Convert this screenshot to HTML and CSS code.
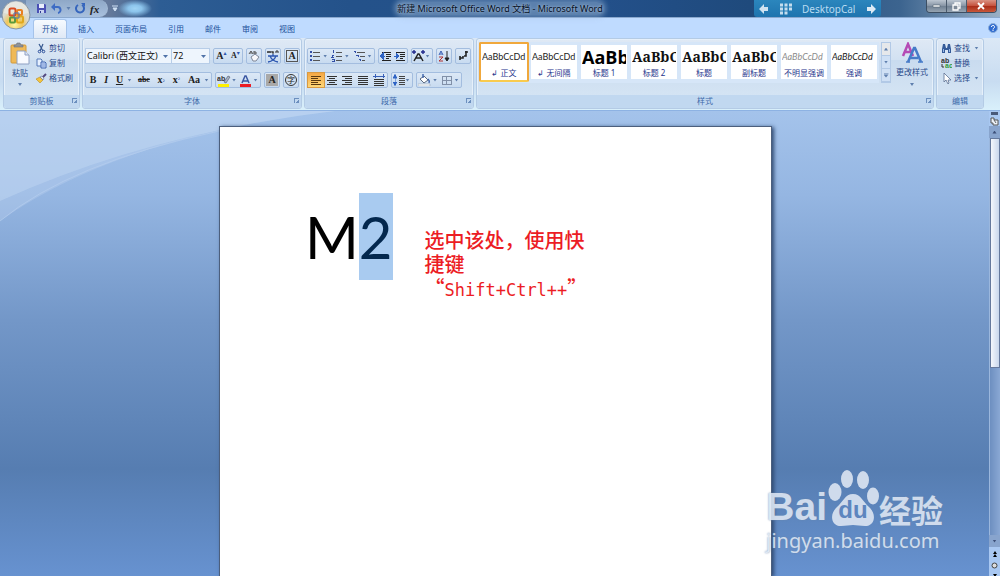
FILE: index.html
```html
<!DOCTYPE html>
<html lang="zh-CN">
<head>
<meta charset="utf-8">
<title>新建 Microsoft Office Word 文档 - Microsoft Word</title>
<link rel="stylesheet" href="styles.css">
</head>
<body>
<header class="titlebar">
  <div class="quick">
    <button class="plain" aria-label="保存"><svg width="11" height="11" viewBox="0 0 11 11"><path d="M1 1h8l1 1v8H1z" fill="#4a50b4"/><path d="M3 1h5v4H3z" fill="#e8eefc"/><path d="M3 7h5v3H3z" fill="#c9d3f1"/><path d="M4 8h1v2H4z" fill="#333c90"/></svg></button>
    <button class="plain" aria-label="撤消"><svg width="11" height="11" viewBox="0 0 11 11"><path d="M2 4h4a3 3 0 0 1 1 6" fill="none" stroke="#3e6cc4" stroke-width="2"/><path d="M0 4l4-4v8z" fill="#3e6cc4"/></svg></button>
    <i class="caret"></i>
    <button class="plain" aria-label="重复"><svg width="11" height="11" viewBox="0 0 11 11"><path d="M7 2a4 4 0 1 1-4 0" fill="none" stroke="#3565bd" stroke-width="2"/><path d="M6 0h4v4z" fill="#3565bd"/></svg></button>
    <button class="plain fx" aria-label="公式">fx</button>
  </div>
  <button class="plain more" aria-label="自定义快速访问工具栏"><svg width="6" height="7" viewBox="0 0 6 7"><path d="M0 1h6M1 3h4L3 6z" stroke="#cfe0f4" fill="#cfe0f4"/></svg></button>
  <div class="glow"></div>
  <h1 class="title"><span>新建 Microsoft Office Word 文档 - Microsoft Word</span></h1>
  <div class="desktopcal">
    <svg width="10" height="10" viewBox="0 0 10 10"><path d="M0 5l5-5v3h4v4H5v3z" fill="#cfe3f1"/></svg>
    <svg width="12" height="12" viewBox="0 0 12 12"><path d="M0 2h12M0 6h12M0 10h8" stroke="#c4ddee" stroke-width="3" stroke-dasharray="3 1.500"/></svg>
    <span>DesktopCal</span>
    <svg width="10" height="10" viewBox="0 0 10 10"><path d="M10 5L5 0v3H1v4h4v3z" fill="#dcebf5"/></svg>
  </div>
  <div class="winbtns">
    <button aria-label="最小化"><svg width="9" height="5" viewBox="0 0 9 5"><path d="M1 1h7v2H1z" fill="#fff" stroke="#53616f" stroke-width=".6"/></svg></button>
    <button aria-label="还原"><svg width="9" height="9" viewBox="0 0 9 9"><path d="M3 1h5v5H3z" fill="none" stroke="#fff" stroke-width="1.3"/><path d="M1 3h5v5H1z" fill="#7f8b98" stroke="#fff" stroke-width="1.3"/></svg></button>
    <button class="close" aria-label="关闭"><svg width="9" height="8" viewBox="0 0 9 8"><path d="M1 1l6 6M7 1L1 7" stroke="#fff" stroke-width="1.8"/></svg></button>
  </div>
</header>
<button class="office" aria-label="Office 按钮"><svg width="32" height="30" viewBox="0 0 30 30"><defs><radialGradient id="orb" cx=".45" cy=".85"><stop offset="0" stop-color="#fff7a0"/><stop offset=".55" stop-color="#f0c65c"/><stop offset="1" stop-color="#dbdad0"/></radialGradient></defs><circle cx="15" cy="15" r="14" fill="url(#orb)" stroke="#8796a6"/><path d="M3 13a12 12 0 0 1 24 0Q15 17 3 13z" fill="#fff" opacity=".35"/><rect x="8.500" y="8.500" width="6" height="7" rx="1.500" fill="none" stroke="#d94b20" stroke-width="2"/><rect x="16" y="10" width="5" height="5" rx="1" fill="none" stroke="#e88022" stroke-width="2"/><rect x="9" y="17.500" width="5" height="5" rx="1" fill="none" stroke="#5c9a3b" stroke-width="2"/><rect x="16" y="16.500" width="6" height="6" rx="1" fill="none" stroke="#e0a71c" stroke-width="2"/><path d="M13 13h5v5h-5z" fill="none" stroke="#4b79bd"/></svg></button>
<nav class="tabs">
  <button class="tab active">开始</button><button class="tab">插入</button><button class="tab">页面布局</button><button class="tab">引用</button><button class="tab">邮件</button><button class="tab">审阅</button><button class="tab">视图</button>
  <button class="plain help" aria-label="帮助"><svg width="10" height="10" viewBox="0 0 10 10"><circle cx="5" cy="5" r="4.500" fill="#2f6bd0" stroke="#8badd9"/><path d="M3.500 4a1.500 1.500 0 1 1 2 1.300L5 6.500M5 7v1" stroke="#fff" fill="none"/></svg></button>
</nav>
<main class="ribbon">
  <section class="group clipboard">
    <div class="body clip-body">
      <button class="plain paste"><svg width="20" height="24" viewBox="0 0 20 24"><rect x="1" y="3" width="15" height="18" rx="1" fill="#efb958" stroke="#d39a3b"/><path d="M4 5V3h2l1-2h3l1 2h2v2z" fill="#8d9299" stroke="#6c7179" stroke-width=".6"/><path d="M7 9h8l4 4v9H7z" fill="#f8faff" stroke="#8fa0c2"/><path d="M15 9v4h4" fill="#dbe4f4" stroke="#8fa0c2"/></svg><span>粘贴</span><i class="caret"></i></button>
      <div class="stack">
        <button class="plain item"><svg width="11" height="11" viewBox="0 0 11 11"><path d="M3 1l4 7M7 1L4 8" stroke="#37588f" stroke-width="1.2"/><circle cx="3.500" cy="8.500" r="1.300" fill="none" stroke="#2f539c"/><circle cx="7.500" cy="8.500" r="1.300" fill="none" stroke="#2f539c"/></svg>剪切</button>
        <button class="plain item"><svg width="11" height="11" viewBox="0 0 11 11"><path d="M1 1h4l1 1v6H1z" fill="#e6f0ff" stroke="#5579b8"/><path d="M5 4h4l1 1v5H5z" fill="#cddfff" stroke="#3f65ae"/><path d="M6 6h3M6 8h3" stroke="#4b6fb5" stroke-width=".7"/></svg>复制</button>
        <button class="plain item"><svg width="11" height="11" viewBox="0 0 11 11"><path d="M0 6l4-2 3 3-3 3z" fill="#f2c53f" stroke="#b98a25" stroke-width=".6"/><path d="M4 4l2-1 2 2-1 2z" fill="#dfe4ee" stroke="#596c92" stroke-width=".6"/><path d="M7 4l3-3" stroke="#544a82" stroke-width="2"/></svg>格式刷</button>
      </div>
    </div>
    <footer class="caption">剪贴板<i class="launch"></i></footer>
  </section>

  <section class="group font">
    <div class="body">
      <div class="row">
        <div class="combos"><label class="combo face"><select aria-label="字体"><option>Calibri (西文正文)</option></select></label><label class="combo size"><select aria-label="字号"><option>72</option></select></label></div>
        <div class="set w30"><button class="b serif" aria-label="增大字体">A<sup>▴</sup></button><button class="b serif small" aria-label="缩小字体">A<sup>▾</sup></button></div>
        <div class="set w16"><button class="b" aria-label="清除格式"><svg width="12" height="12" viewBox="0 0 12 12"><path d="M1 4l2-3 2 3M2 3h2M6 1v3h2V2H6" fill="none" stroke="#555"/><path d="M3 7l4-3 4 3-3 4H5z" fill="#f8f8fb" stroke="#7e8798"/></svg></button></div>
        <div class="set w16"><button class="b" aria-label="拼音指南"><svg width="12" height="13" viewBox="0 0 12 13"><path d="M0 1l1 2 1-2 1 2 1-2M5 2h2M5 1v2h2M9 3V1h2v2" fill="none" stroke="#333"/><path d="M1 6h10M6 4v2M3 6q2 5 8 6M9 6q-2 5-8 6" fill="none" stroke="#2c56b0" stroke-width="1.300"/></svg></button></div>
        <div class="set w16"><button class="b serif" aria-label="字符边框"><u class="boxed">A</u></button></div>
      </div>
      <div class="row">
        <div class="set w127"><button class="b serif">B</button><button class="b serif it">I</button><button class="b serif ul">U</button><i class="caret"></i><button class="b serif strike">abc</button><button class="b serif">x<sub>₂</sub></button><button class="b serif">x<sub>²</sub></button><button class="b serif aa">Aa</button><i class="caret last"></i></div>
        <div class="set w46"><button class="b mark" aria-label="突出显示"><svg width="14" height="13" viewBox="0 0 14 13"><path d="M1 10h11v3H1z" fill="#fff000"/><text x="0" y="7" class="tiny">ab</text><path d="M7 8l4-6 2 1-4 6z" fill="#aab3c3" stroke="#4a5468" stroke-width=".6"/></svg></button><i class="caret"></i><button class="b" aria-label="字体颜色"><svg width="13" height="13" viewBox="0 0 13 13"><path d="M3 9l3-7h1l3 7M4 7h5" fill="none" stroke="#3b58a2" stroke-width="1.5"/><path d="M1 10h11v3H1z" fill="#ec1c24"/></svg></button><i class="caret last"></i></div>
        <div class="set w16"><button class="b serif" aria-label="字符底纹"><span class="shade">A</span></button></div>
        <div class="set w16"><button class="b" aria-label="带圈字符"><span class="ring">字</span></button></div>
      </div>
    </div>
    <footer class="caption">字体<i class="launch"></i></footer>
  </section>

  <section class="group para">
    <div class="body">
      <div class="row">
        <div class="set w68"><button class="b" aria-label="项目符号"><svg class="lines" width="12" height="12" viewBox="0 0 12 12"><path d="M4 2h7M4 6h7M4 10h7" stroke="#555"/><path d="M1 2h2M1 6h2M1 10h2" stroke="#334fa6" stroke-width="2"/></svg></button><i class="caret"></i><button class="b" aria-label="编号"><svg class="lines" width="12" height="12" viewBox="0 0 12 12"><path d="M5 2h6M5 6h6M5 10h6" stroke="#555"/><path d="M2 0v3M1 5h2l-2 2h2M1 9h2v2H1" fill="none" stroke="#334fa6"/></svg></button><i class="caret"></i><button class="b" aria-label="多级列表"><svg class="lines" width="13" height="12" viewBox="0 0 13 12"><path d="M4 2h8M7 6h5M9 10h3" stroke="#555"/><path d="M1 1h1v2M3 5h2v2M6 9h1v2" fill="none" stroke="#334fa6"/></svg></button><i class="caret last"></i></div>
        <div class="set w30"><button class="b" aria-label="减少缩进"><svg class="lines" width="12" height="12" viewBox="0 0 12 12"><path d="M2 2h9M6 4h5M6 6h5M6 8h3M2 10h9" stroke="#222"/><path d="M0 6l3-3v6zM2 6h3" fill="#2e63c4" stroke="#2e63c4"/></svg></button><button class="b" aria-label="增加缩进"><svg class="lines" width="12" height="12" viewBox="0 0 12 12"><path d="M2 2h9M6 4h5M6 6h5M6 8h3M2 10h9" stroke="#222"/><path d="M5 6L2 3v6zM0 6h3" fill="#2e63c4" stroke="#2e63c4"/></svg></button></div>
        <div class="set w22"><button class="b" aria-label="中文版式"><svg width="13" height="12" viewBox="0 0 13 12"><path d="M2 11l4-7h1l4 7M4 8h5" fill="none" stroke="#222" stroke-width="1.500"/><path d="M0 2h4M9 2h4M2 0v4M11 0v4" stroke="#222a8c" stroke-width="1.400"/></svg></button><i class="caret last"></i></div>
        <div class="set w16"><button class="b" aria-label="排序"><svg width="12" height="12" viewBox="0 0 12 12"><path d="M1 5l2-4 2 4M2 4h2" fill="none" stroke="#355bb2"/><path d="M1 7h4l-4 4h4" fill="none" stroke="#b23333"/><path d="M9 1v9M7 8l2 3 2-3z" fill="#222" stroke="#222"/></svg></button></div>
        <div class="set w16"><button class="b" aria-label="显示编辑标记"><svg width="12" height="12" viewBox="0 0 12 12"><path d="M9 1v5H7M8 2h3M3 8h3V6M3 6v4" fill="none" stroke="#222" stroke-width="1.600"/></svg></button></div>
      </div>
      <div class="row">
        <div class="set w81"><button class="b on" aria-label="左对齐"><svg class="lines" width="12" height="12" viewBox="0 0 12 12"><path d="M1 2h10M1 4h7M1 6h10M1 8h7M1 10h10" stroke="#5b3a10"/></svg></button><button class="b" aria-label="居中"><svg class="lines" width="12" height="12" viewBox="0 0 12 12"><path d="M1 2h10M3 4h6M1 6h10M3 8h6M1 10h10" stroke="#333"/></svg></button><button class="b" aria-label="右对齐"><svg class="lines" width="12" height="12" viewBox="0 0 12 12"><path d="M1 2h10M4 4h7M1 6h10M4 8h7M1 10h10" stroke="#333"/></svg></button><button class="b" aria-label="两端对齐"><svg class="lines" width="12" height="12" viewBox="0 0 12 12"><path d="M1 2h10M1 4h10M1 6h10M1 8h10M1 10h10" stroke="#333"/></svg></button><button class="b" aria-label="分散对齐"><svg class="lines" width="12" height="12" viewBox="0 0 12 12"><path d="M1 5h10M1 7h10M1 9h10M1 11h10" stroke="#333"/><path d="M0 2h12M2 0v4M10 0v4" stroke="#3860b8"/></svg></button></div>
        <div class="set w22"><button class="b" aria-label="行距"><svg class="lines" width="12" height="12" viewBox="0 0 12 12"><path d="M6 2h6M6 4h6M6 6h6M6 8h6M6 10h6" stroke="#444"/><path d="M2 0l2 4H0zM2 12l2-4H0zM2 3v6" fill="#2e63c4" stroke="#2e63c4" stroke-width=".5"/></svg></button><i class="caret last"></i></div>
        <div class="set w46"><button class="b" aria-label="底纹"><svg width="13" height="12" viewBox="0 0 13 12"><path d="M2 5l4-3 4 4-4 3z" fill="#fff" stroke="#5d6a80"/><path d="M5 0v4M10 5q2 2 1 4" fill="none" stroke="#3d63ab" stroke-width="1.400"/><path d="M0 10h12v2H0z" fill="#fff" stroke="#9aa7bb" stroke-width=".6"/></svg></button><i class="caret"></i><button class="b" aria-label="边框"><svg class="lines" width="12" height="12" viewBox="0 0 12 12"><path d="M1 2h9v8H1zM5.500 2v8M1 6h9" fill="none" stroke="#8190a8"/></svg></button><i class="caret last"></i></div>
      </div>
    </div>
    <footer class="caption">段落<i class="launch"></i></footer>
  </section>

  <section class="group styles">
    <div class="body style-body">
      <div class="gallery">
        <button class="tile sel"><b class="s-cal">AaBbCcDd</b><span>↲ 正文</span></button>
        <button class="tile"><b class="s-cal">AaBbCcDd</b><span>↲ 无间隔</span></button>
        <button class="tile"><b class="s-h1">AaBb</b><span>标题 1</span></button>
        <button class="tile"><b class="s-h2">AaBbC</b><span>标题 2</span></button>
        <button class="tile"><b class="s-h2">AaBbC</b><span>标题</span></button>
        <button class="tile"><b class="s-h2">AaBbC</b><span>副标题</span></button>
        <button class="tile"><b class="s-cal s-it s-dim">AaBbCcDd</b><span>不明显强调</span></button>
        <button class="tile"><b class="s-cal s-it">AaBbCcDd</b><span>强调</span></button>
      </div>
      <div class="gscroll"><button aria-label="上一行" class="off"><i class="caret up"></i></button><button aria-label="下一行"><i class="caret"></i></button><button aria-label="其他"><i class="caret bar"></i></button></div>
      <button class="plain change"><svg width="22" height="22" viewBox="0 0 22 22"><path d="M2 14L7 2l5 12M4 10h6" fill="none" stroke="#b54bb5" stroke-width="2.500"/><path d="M7 20l6-14h1l6 14M9 16h8" fill="none" stroke="#467bc8" stroke-width="2.500"/><path d="M5 20h4M17 20h5" stroke="#467bc8" stroke-width="1.500"/></svg><span>更改样式</span><i class="caret"></i></button>
    </div>
    <footer class="caption">样式<i class="launch"></i></footer>
  </section>

  <section class="group edit">
    <div class="body stack">
      <button class="plain item"><svg width="11" height="11" viewBox="0 0 11 11"><path d="M1 6l1-5h2l1 4h1l1-4h2l1 5v4H7V7H4v3H1z" fill="#355b99"/><path d="M2 6h1v3H2zM8 6h1v3H8z" fill="#9bbbe8"/></svg>查找<i class="caret"></i></button>
      <button class="plain item"><svg width="11" height="11" viewBox="0 0 11 11"><text x="0" y="5" class="tiny">ab</text><text x="4" y="10" class="tiny green">ac</text><path d="M1 6v3h2" fill="none" stroke="#333"/></svg>替换</button>
      <button class="plain item"><svg width="11" height="11" viewBox="0 0 11 11"><path d="M3 0v9l2-2 2 4 1-1-1-3h3z" fill="#fff" stroke="#5b6e92" stroke-width=".8"/></svg>选择<i class="caret"></i></button>
    </div>
    <footer class="caption">编辑</footer>
  </section>
</main>

<div class="workspace">
  <div class="desk">
    <svg class="swoosh" width="340" height="112" viewBox="0 0 340 112"><path d="M0 0H335Q120 25 0 110z" fill="#c8dcf4" opacity=".28"/><path d="M0 0H335Q150 22 0 90z" fill="#c8dcf4" opacity=".38"/><path d="M0 110Q70 52 219 20" fill="none" stroke="#b5cdee" opacity=".7"/></svg>
    <article class="page">
      <p class="big">M<mark>2</mark></p>
      <p class="note">选中该处，使用快捷键<br>“<span>Shift+Ctrl++</span>”</p>
    </article>
    <div class="watermark">
      <div class="wm-top"><span class="wm-bai">Bai</span><span class="wm-paw"><svg width="52" height="58" viewBox="0 0 52 58"><g fill="#dce5f2"><ellipse cx="8" cy="23" rx="6.500" ry="9"/><ellipse cx="20" cy="10" rx="6" ry="9"/><ellipse cx="36" cy="11" rx="6" ry="9"/><ellipse cx="46" cy="27" rx="6" ry="8.500"/><path d="M26 25c8 0 10 8 16 13 8 7 6 19-4 19-5 0-8-1-12-1s-7 1-12 1C4 57 2 45 10 38c6-5 8-13 16-13z"/></g></svg><span>du</span></span><span class="wm-cn">经验</span></div>
      <div class="wm-url">jingyan.baidu.com</div>
    </div>
  </div>
  <div class="scroll">
    <button class="split" aria-label="拆分"></button>
    <button class="plain" aria-label="标尺"><svg width="9" height="10" viewBox="0 0 9 10"><path d="M1 2h3v2h4v5H3V7H1z" fill="#eef3fa" stroke="#555"/><path d="M4 4l2 3" stroke="#666"/></svg></button>
    <button class="plain arrow" aria-label="向上"><i class="caret up"></i></button>
    <div class="track"><div class="thumb"></div></div>
    <button class="plain arrow" aria-label="向下"><i class="caret"></i></button>
    <div class="browse"><button class="plain" aria-label="上一页"><svg width="6" height="6" viewBox="0 0 6 6"><path d="M3 0l2 3H1zM3 3l2 3H1z"/></svg></button><button class="plain" aria-label="选择浏览对象"><svg width="7" height="7" viewBox="0 0 7 7"><circle cx="3.500" cy="3.500" r="2.500" fill="#ddd" stroke="#444"/></svg></button><button class="plain" aria-label="下一页"><svg width="6" height="6" viewBox="0 0 6 6"><path d="M3 3l2-3H1zM3 6l2-3H1z"/></svg></button></div>
  </div>
</div>
</body>
</html>
```

FILE: styles.css
```css
* { box-sizing: border-box; }
html, body { height: 100%; margin: 0; }
body {
  display: flex; flex-direction: column; overflow: hidden; position: relative;
  font: 8px/12px "Noto Sans", "Noto Sans CJK SC", sans-serif; color: #2a4a8a;
}
button, select { font: inherit; color: inherit; margin: 0; padding: 0; border: 0; background: none; }
button { display: flex; align-items: center; justify-content: center; white-space: nowrap; }
svg { display: block; flex: none; }
.lines { shape-rendering: crispEdges; }
.caret { flex: none; width: 5px; height: 3px; margin: 0 2px; background: #5f7fae; clip-path: polygon(10% 0, 90% 0, 50% 100%); }
.caret.up { clip-path: polygon(50% 0, 90% 100%, 10% 100%); }
.tiny { font: bold 7px "Liberation Sans", sans-serif; fill: #333; }
.green { fill: #2f9a3c; }

/* title bar */
.titlebar {
  flex: none; height: 18px; display: flex; align-items: flex-start; position: relative; padding-left: 26px;
  background: linear-gradient(90deg, #7895b9 0, #64799b 110px, #2d5d94 160px, #24528a 35%, #23508a 60%, #1f4a7c 75%, #3c648f 90%, #9ab0c6 100%);
  border-bottom: 1px solid #8ba9cf;
}
.quick { display: flex; align-items: center; gap: 4px; height: 17px; width: 82px; padding-left: 10px; border: 1px solid #a4bad5; border-width: 0 1px 0 0; border-radius: 0 9px 9px 0; background: linear-gradient(#8fa8c7, #a8c0de); }
.quick .caret { margin: 0; }
.fx { font: italic bold 11px/12px "Liberation Serif", serif; color: #222; }
.more { height: 17px; margin-left: 4px; }
.glow { width: 34px; height: 17px; background: radial-gradient(closest-side, #9fd3f4, #8cc4ec 40%, transparent); }
.title { position: absolute; left: 0; right: 0; top: 2px; margin: 0; text-align: center; font: 9px/14px "Noto Sans", "Noto Sans CJK SC", sans-serif; color: #06101f; }
.title span { background: rgba(160, 186, 214, .45); box-shadow: 0 0 5px 3px rgba(160, 186, 214, .45); border-radius: 6px; text-shadow: 0 0 3px #c4d6ea; }
.desktopcal { position: relative; display: flex; align-items: center; justify-content: space-between; width: 127px; height: 17px; margin-left: auto; margin-right: 45px; padding: 0 5px; border-radius: 0 0 3px 3px; background: linear-gradient(#2b86bd, #1f74ae); color: #b9dcf2; font-size: 10px; }
.winbtns { position: relative; display: flex; height: 13px; margin-right: 3px; border: 1px solid #3d4f63; border-top: 0; border-radius: 0 0 4px 4px; overflow: hidden; }
.winbtns button { width: 20px; background: linear-gradient(#bcc6d1, #8593a3 50%, #6f7f91 51%, #96a4b2); border-right: 1px solid #4a5a6c; }
.winbtns .close { width: 29px; border: 0; background: linear-gradient(#d99182, #c4503b 50%, #a82c18 51%, #c9583a); }
.office { position: absolute; left: 0; top: 0; z-index: 2; }

/* tabs */
.tabs { flex: none; height: 20px; display: flex; align-items: flex-end; padding-left: 33px; background: #bfdbff; color: #20509a; }
.tab { height: 19px; padding: 0 10px 0 11px; }
.tab.active { width: 34px; padding: 0; border: 1px solid #a5c3ea; border-bottom: 0; border-radius: 3px 3px 0 0; background: linear-gradient(#f6faff, #dfe9f6); }
.help { margin-left: auto; padding: 0 2px 5px 0; }

/* ribbon */
.ribbon { flex: none; display: flex; gap: 2px; padding: 0 3px 1px; background: linear-gradient(#dbe8f6, #c8dcf1 60%, #d9f0fb); border-bottom: 1px solid #8db2e3; }
.group { flex: none; display: flex; flex-direction: column; border: 1px solid #b4cbe5; border-radius: 3px; background: linear-gradient(#dfe9f5, #d2e1f2 30%, #c9dbef 31%, #d8e7f5); box-shadow: inset 0 0 0 1px #e6f0fa; overflow: hidden; }
.body { display: flex; flex-direction: column; gap: 8px; height: 56px; padding: 9px 2px 0; }
.caption { display: flex; justify-content: center; position: relative; height: 13px; background: #c1d8f0; color: #3e6aaa; }
.launch { position: absolute; right: 2px; top: 3px; width: 5px; height: 5px; border: 1px solid #6c8fbe; border-width: 1px 0 0 1px; background: linear-gradient(135deg, transparent 55%, #6c8fbe 55%); }
.clip-body { flex-direction: row; gap: 6px; width: 75px; padding: 3px 0 0 6px; }
.paste { flex-direction: column; justify-content: flex-start; width: 20px; }
.paste span { margin: 1px 0 4px; }
.stack { display: flex; flex-direction: column; gap: 3px; padding: 0; }
.item { height: 12px; justify-content: flex-start; gap: 2px; }
.font { flex-basis: 220px; }
.para { flex-basis: 170px; }
.row { display: flex; gap: 3px; height: 16px; }
.set { flex: none; display: flex; align-items: center; border: 1px solid #a3bddf; border-radius: 2px; background: linear-gradient(#dce8f6, #c8dbf0); }
.set .caret { margin: 0 2px 0 0; }
.w16 { width: 16px; }
.w22 { width: 22px; }
.w30 { width: 30px; }
.w46 { width: 46px; }
.w68 { width: 68px; }
.w81 { width: 81px; }
.w127 { width: 127px; }
.b { flex: 1 1 auto; height: 14px; min-width: 0; color: #222; }
.b svg { max-height: 13px; }
.serif { font: bold 10px/12px "Liberation Serif", serif; }
.small { font-size: 8px; }
.serif sup, .serif sub { font: 6px/8px "DejaVu Sans", sans-serif; color: #2e55ad; align-self: flex-start; }
.serif sub { align-self: center; }
.it { font-style: italic; }
.ul { text-decoration: underline; }
.strike { font-size: 8px; text-decoration: line-through; }
.boxed { text-decoration: none; border: 1px solid #555; line-height: 10px; padding: 0 1px; }
.shade { background: #a9a9a9; padding: 0 2px; }
.ring { border: 1px solid #333; border-radius: 6px; width: 12px; line-height: 10px; }
.on { background: linear-gradient(#f5a744, #fed778); outline: 1px solid #d99a42; }
.combos { display: flex; }
.combo { position: relative; display: flex; height: 16px; background: #eef5fd; border: 1px solid #b7cde8; }
.combo::after { content: ""; position: absolute; right: 3px; top: 6px; width: 5px; height: 3px; background: #4f72a8; clip-path: polygon(0 0, 100% 0, 50% 100%); }
.combo select { width: 100%; appearance: none; color: #111; font-size: 9px; padding-left: 1px; }
.face { width: 87px; }
.size { width: 38px; border-left: 0; }

/* styles gallery */
.styles { flex: 0 0 458px; }
.style-body { flex-direction: row; gap: 2px; padding: 3px 2px 0; }
.gallery { display: flex; height: 41px; background: #d6e6f8; }
.tile { flex-direction: column; justify-content: flex-end; width: 50px; height: 40px; overflow: hidden; border: 3px solid transparent; border-width: 3px 2px; background: #fff; background-clip: padding-box; color: #26348c; }
.tile.sel { border: 2px solid #f0a83c; border-bottom-color: #f9cb4e; border-radius: 2px; padding-bottom: 1px; }
.tile b { display: flex; align-items: center; height: 20px; width: 44px; overflow: hidden; color: #222; font-weight: normal; }
.tile .s-cal { font: 9px/14px Lato, sans-serif; }
.tile .s-h1 { font: bold 18px/20px "Open Sans", sans-serif; color: #000; }
.tile .s-h2 { font: bold 14px/20px "Noto Serif", "Liberation Serif", serif; color: #111; }
.tile .s-it { font-style: italic; }
.tile .s-dim { color: #8c8c8c; }
.gscroll { display: flex; flex-direction: column; height: 41px; width: 10px; border: 1px solid #b2c9e6; }
.gscroll button { flex: 1; background: #cfe0f5; border-bottom: 1px solid #b2c9e6; }
.gscroll .off { background: #e6e8eb; }
.gscroll .caret { margin: 0; }
.bar { height: 5px; clip-path: polygon(0 0, 100% 0, 100% 20%, 0 20%, 0 40%, 100% 40%, 50% 100%, 0 40%); }
.change { flex-direction: column; justify-content: flex-start; width: 38px; }
.change span { margin: 2px 0 5px; }
.edit { flex: 0 0 48px; }
.edit .stack { padding: 3px 0 0 4px; gap: 3px; }

/* document area */
.workspace { flex: 1; min-height: 0; display: flex; }
.desk { flex: 1; position: relative; display: flex; justify-content: center; padding: 15px 0 0 2px; background: linear-gradient(#a4c3eb, #95b6e2 18%, #7397c8 45%, #567db1 77%, #6792d0); }
.swoosh { position: absolute; left: 0; top: 0; }
.page { position: relative; display: flex; align-items: flex-start; width: 553px; padding: 66px 0 0 85px; background: #fff; border: 1px solid #4c5f7d; border-bottom: 0; box-shadow: 2px 1px 4px #2e4870; }
.big { margin: 0; font: 58px/87px Lato, sans-serif; color: #000; }
.big mark { display: inline-block; height: 87px; background: #a9cbf0; color: #04284e; }
.note { margin: 35px 0 0 32px; width: 166px; font: 500 20px/24px KaiTi, "Noto Sans CJK SC", sans-serif; color: #ec1c24; }
.note span { font: 17px/24px "DejaVu Sans Mono", monospace; }
.watermark { position: absolute; right: 46px; bottom: 21px; color: #dce5f2; opacity: .9; text-shadow: 0 0 2px #6b86ad; }
.wm-top { display: flex; align-items: flex-end; height: 58px; }
.wm-bai { font: bold 39px/40px "Liberation Sans", sans-serif; }
.wm-paw { position: relative; }
.wm-paw span { position: absolute; left: 0; right: 0; bottom: 3px; text-align: center; font: bold 24px/28px "Liberation Sans", sans-serif; color: #5e86bf; text-shadow: none; }
.wm-cn { font: bold 32px/36px "Noto Sans CJK SC", sans-serif; }
.wm-url { font: 20px/28px "Noto Sans", sans-serif; }

/* scroll bar */
.scroll { flex: none; width: 11px; display: flex; flex-direction: column; background: #a9c8f2; }
.split { flex: none; height: 3px; margin: 1px 2px 1px; background: #48597a; }
.arrow { flex: none; height: 12px; background: #88a4cd; }
.arrow .caret { background: #3d4f78; }
.track { flex: 1; background: linear-gradient(90deg, #6d8fc0, #8aa8d4); border-left: 1px solid #9bb7dd; }
.thumb { height: 58%; background: linear-gradient(90deg, #f4f7fc, #c9d7ec); border: 1px solid #65799d; }
.browse { display: flex; flex-direction: column; align-items: center; gap: 5px; padding-top: 4px; height: 29px; overflow: hidden; }
```
